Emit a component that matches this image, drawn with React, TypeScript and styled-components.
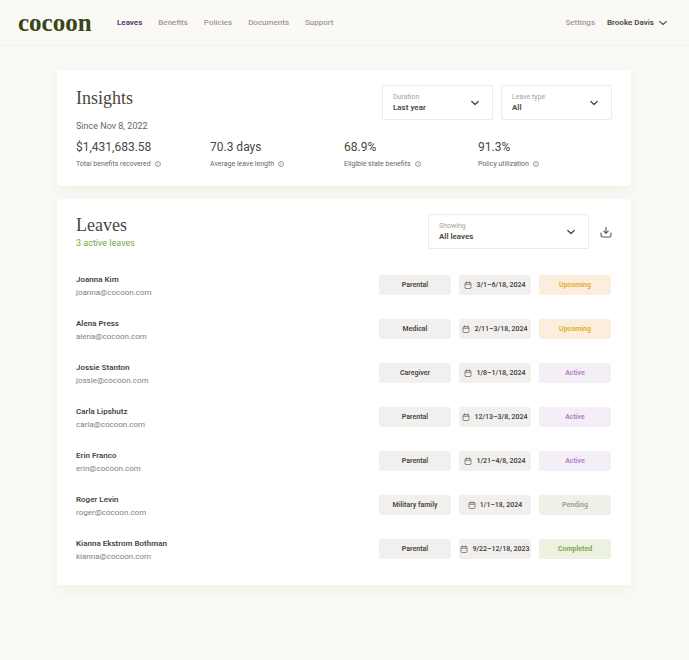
import React, { useState } from 'react';
import styled, { createGlobalStyle } from 'styled-components';

const GlobalStyle = createGlobalStyle`
  *, *::before, *::after { box-sizing: border-box; }
  body {
    margin: 0;
    background: #faf9f5;
    color: #4c463c;
    font-family: Roboto, 'Liberation Sans', sans-serif;
    font-size: 8px;
    line-height: 12px;
  }
  h1, h2, p, dl, dd, dt { margin: 0; }
  button, select { font: inherit; color: inherit; }
`;

const Header = styled.header`
  display: flex;
  align-items: center;
  height: 46px;
  padding: 0 20px 0 18px;
  border-bottom: 1px solid #f1f1ef;
`;

const Logo = styled.a`
  width: 72px;
  margin-right: 27px;
  color: #374517;
  font: 700 25px/24px 'Liberation Serif', serif;
  text-decoration: none;
`;

const Nav = styled.nav`
  display: flex;
  flex: 1;
  gap: 16px;
`;

const NavLink = styled.a<{ $active?: boolean }>`
  color: ${(p) => (p.$active ? '#5d3c70' : '#a09a90')};
  font-weight: ${(p) => (p.$active ? 700 : 500)};
  text-decoration: none;
`;

const Account = styled.div`
  display: flex;
  align-items: center;
  gap: 12px;
`;

const UserButton = styled.button`
  display: flex;
  align-items: center;
  gap: 3px;
  padding: 0;
  border: 0;
  background: none;
  font-weight: 600;
  color: #4c463c;
`;

const Main = styled.main`
  display: flex;
  flex-direction: column;
  gap: 13px;
  padding: 24px 58px 75px 57px;
`;

const Card = styled.section`
  padding: 15px 19px 14px;
  border-radius: 3px;
  background: #fff;
  box-shadow: 0 4px 14px rgba(76, 70, 40, 0.06);
`;

const CardHeader = styled.div`
  display: flex;
  justify-content: space-between;
  align-items: flex-start;
`;

const Title = styled.h2<{ $compact?: boolean }>`
  font: 400 18px/${(p) => (p.$compact ? 22 : 26)}px 'Liberation Serif', serif;
`;

const Controls = styled.div`
  display: flex;
  align-items: center;
  gap: 8px;
`;

const Field = styled.div<{ $wide?: boolean }>`
  display: grid;
  grid-template-columns: 1fr 12px;
  align-items: center;
  width: ${(p) => (p.$wide ? 161 : 111)}px;
  height: 35px;
  padding-right: 11px;
  border: 1px solid #ecece2;
  border-radius: 2px;

  label {
    grid-area: 1 / 1;
    align-self: start;
    padding: 5px 0 0 10px;
    color: #a8a39a;
    font-size: 7px;
    pointer-events: none;
    z-index: 1;
  }
  svg {
    grid-area: 1 / 2;
    pointer-events: none;
    z-index: 1;
  }
`;

const Select = styled.select`
  grid-area: 1 / 1 / 2 / 3;
  align-self: stretch;
  width: 100%;
  padding: 10px 0 0 10px;
  appearance: none;
  border: 0;
  background: transparent;
  font-weight: 600;
`;

const Since = styled.p`
  font-size: 9px;
  line-height: 12px;
  color: #6b665c;
`;

const Stats = styled.dl`
  display: grid;
  grid-template-columns: repeat(4, 1fr);
  padding: 7px 0 2px;
`;

const Stat = styled.div`
  display: flex;
  flex-direction: column-reverse;
  gap: 3px;
`;

const StatLabel = styled.dt`
  display: flex;
  align-items: center;
  gap: 4px;
  font-size: 7px;
  line-height: 12px;
  color: #6b665c;
`;

const StatValue = styled.dd`
  font-size: 12px;
  line-height: 16px;
`;

const ActiveCount = styled.p`
  color: #7ba548;
  font-size: 9px;
  line-height: 14px;
`;

const IconButton = styled.button`
  display: flex;
  margin-left: 3px;
  padding: 0;
  border: 0;
  background: none;
`;

const LeaveTable = styled.table`
  width: 100%;
  margin-top: 13px;
  padding-right: 1px;
  border-collapse: separate;
  border-spacing: 0;
  table-layout: fixed;

  tr { height: 44px; }
  td { padding: 0 0 0 8px; }
`;

const Person = styled.th`
  padding: 2px 0 0;
  font-weight: 400;
  line-height: 13px;
  text-align: left;
`;

const Name = styled.div`
  font-weight: 600;
`;

const Email = styled.a`
  display: block;
  color: #858077;
  text-decoration: none;
`;

type Tone = 'neutral' | 'upcoming' | 'active' | 'pending' | 'completed';

const tones: Record<Tone, [string, string]> = {
  neutral: ['#f1f0ee', '#4c463c'],
  upcoming: ['#fceedd', '#e3a828'],
  active: ['#f4eef7', '#b27acb'],
  pending: ['#f0f0e8', '#98a285'],
  completed: ['#ecf2df', '#7ba548'],
};

const Pill = styled.span<{ $tone?: Tone }>`
  display: flex;
  align-items: center;
  justify-content: center;
  gap: 4px;
  height: 20px;
  border-radius: 2px;
  background: ${(p) => tones[p.$tone ?? 'neutral'][0]};
  color: ${(p) => tones[p.$tone ?? 'neutral'][1]};
  font-size: 7px;
  font-weight: 600;
  white-space: nowrap;
`;

const Chevron = ({ color = '#4c463c' }: { color?: string }) => (
  <svg width="12" height="12" viewBox="0 0 12 12" fill="none" stroke={color} strokeWidth="1.3" strokeLinecap="round" strokeLinejoin="round" aria-hidden="true">
    <path d="M2.8 4.5 6 7.5 9.2 4.5" />
  </svg>
);

const Info = () => (
  <svg width="6" height="6" viewBox="0 0 12 12" fill="none" stroke="#7d786f" strokeWidth="1.4" aria-hidden="true">
    <circle cx="6" cy="6" r="5" />
    <path d="M6 5.5v3M6 3v1.2" />
  </svg>
);

const Calendar = () => (
  <svg width="8" height="8" viewBox="0 0 16 16" fill="none" stroke="#6b655b" strokeWidth="1.5" aria-hidden="true">
    <rect x="2" y="3" width="12" height="12" rx="2" />
    <path d="M2 6.5h12M5 1v4M11 1v4" />
  </svg>
);

const Download = () => (
  <svg width="12" height="12" viewBox="0 0 12 12" fill="none" stroke="#5c564c" strokeWidth="1.1" strokeLinecap="round" strokeLinejoin="round" aria-hidden="true">
    <path d="M1 7v2.2Q1 11 2.8 11h6.4Q11 11 11 9.2V7M6 1.2v6M3.8 5.2 6 7.4l2.2-2.2" />
  </svg>
);

interface PickerProps {
  id: string;
  label: string;
  options: string[];
  wide?: boolean;
}

const Picker = ({ id, label, options, wide }: PickerProps) => {
  const [value, setValue] = useState(options[0]);
  return (
    <Field $wide={wide}>
      <label htmlFor={id}>{label}</label>
      <Select id={id} value={value} onChange={(e) => setValue(e.target.value)}>
        {options.map((o) => (
          <option key={o}>{o}</option>
        ))}
      </Select>
      <Chevron />
    </Field>
  );
};

const stats = [
  ['$1,431,683.58', 'Total benefits recovered'],
  ['70.3 days', 'Average leave length'],
  ['68.9%', 'Eligible state benefits'],
  ['91.3%', 'Policy utilization'],
];

const leaves: { name: string; email: string; type: string; dates: string; status: string; tone: Tone }[] = [
  { name: 'Joanna Kim', email: 'joanna@cocoon.com', type: 'Parental', dates: '3/1–6/18, 2024', status: 'Upcoming', tone: 'upcoming' },
  { name: 'Alena Press', email: 'alena@cocoon.com', type: 'Medical', dates: '2/11–3/18, 2024', status: 'Upcoming', tone: 'upcoming' },
  { name: 'Jossie Stanton', email: 'jossie@cocoon.com', type: 'Caregiver', dates: '1/8–1/18, 2024', status: 'Active', tone: 'active' },
  { name: 'Carla Lipshutz', email: 'carla@cocoon.com', type: 'Parental', dates: '12/13–3/8, 2024', status: 'Active', tone: 'active' },
  { name: 'Erin Franco', email: 'erin@cocoon.com', type: 'Parental', dates: '1/21–4/8, 2024', status: 'Active', tone: 'active' },
  { name: 'Roger Levin', email: 'roger@cocoon.com', type: 'Military family', dates: '1/1–18, 2024', status: 'Pending', tone: 'pending' },
  { name: 'Kianna Ekstrom Bothman', email: 'kianna@cocoon.com', type: 'Parental', dates: '9/22–12/18, 2023', status: 'Completed', tone: 'completed' },
];

export default function App() {
  return (
    <>
      <GlobalStyle />
      <Header>
        <Logo href="#home">cocoon</Logo>
        <Nav>
          <NavLink href="#leaves" $active aria-current="page">Leaves</NavLink>
          <NavLink href="#benefits">Benefits</NavLink>
          <NavLink href="#policies">Policies</NavLink>
          <NavLink href="#documents">Documents</NavLink>
          <NavLink href="#support">Support</NavLink>
        </Nav>
        <Account>
          <NavLink href="#settings">Settings</NavLink>
          <UserButton type="button">
            Brooke Davis
            <Chevron color="#5f6b3f" />
          </UserButton>
        </Account>
      </Header>
      <Main>
        <Card>
          <CardHeader>
            <Title>Insights</Title>
            <Controls>
              <Picker id="duration" label="Duration" options={['Last year', 'Last month']} />
              <Picker id="leave-type" label="Leave type" options={['All', 'Parental', 'Medical', 'Caregiver']} />
            </Controls>
          </CardHeader>
          <Since>Since Nov 8, 2022</Since>
          <Stats>
            {stats.map(([value, label]) => (
              <Stat key={label}>
                <StatLabel>{label}<Info /></StatLabel>
                <StatValue>{value}</StatValue>
              </Stat>
            ))}
          </Stats>
        </Card>
        <Card>
          <CardHeader>
            <div>
              <Title $compact>Leaves</Title>
              <ActiveCount>3 active leaves</ActiveCount>
            </div>
            <Controls>
              <Picker id="showing" label="Showing" options={['All leaves', 'Active leaves']} wide />
              <IconButton type="button" aria-label="Download"><Download /></IconButton>
            </Controls>
          </CardHeader>
          <LeaveTable>
            <colgroup>
              <col />
              <col width="80" />
              <col width="80" />
              <col width="80" />
            </colgroup>
            <tbody>
              {leaves.map((l) => (
                <tr key={l.email}>
                  <Person scope="row">
                    <Name>{l.name}</Name>
                    <Email href={`mailto:${l.email}`}>{l.email}</Email>
                  </Person>
                  <td><Pill>{l.type}</Pill></td>
                  <td><Pill><Calendar />{l.dates}</Pill></td>
                  <td><Pill $tone={l.tone}>{l.status}</Pill></td>
                </tr>
              ))}
            </tbody>
          </LeaveTable>
        </Card>
      </Main>
    </>
  );
}
